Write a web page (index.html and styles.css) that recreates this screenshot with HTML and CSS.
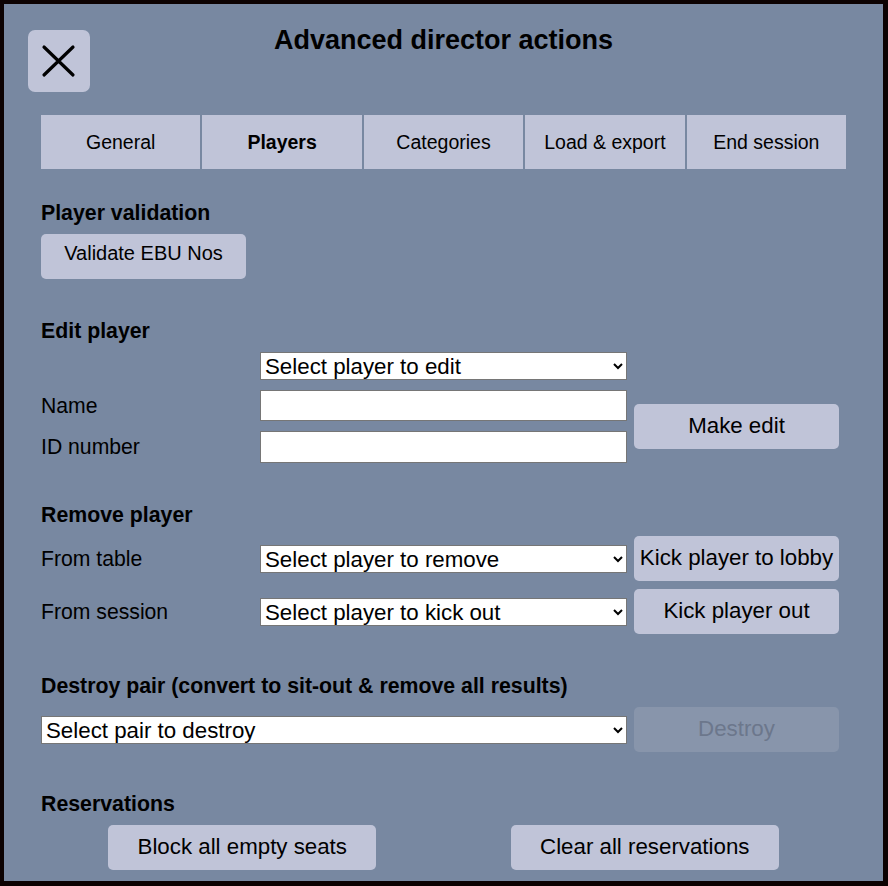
FILE: index.html
```html
<!DOCTYPE html>
<html lang="en">

<head>
    <meta charset="UTF-8">
    <meta name="viewport" content="width=device-width, initial-scale=1.0">
    <title>Advanced director actions</title>
    <link rel="stylesheet" href="styles.css">
</head>

<body>
    <div class="dialog">
        <div class="dialog-header">
            <button class="close-btn" title="Close">
                <svg width="62" height="62" viewBox="0 0 62 62">
                    <path d="M16 17 L45 45 M45 17 L16 45" stroke="#000" stroke-width="3.2" stroke-linecap="round" fill="none" />
                </svg>
            </button>
            <h2 class="dialog-title">Advanced director actions</h2>
            <span></span>
        </div>

        <div class="dialog-body">
            <div class="tabs">
                <button class="tab">General</button>
                <button class="tab tab-active">Players</button>
                <button class="tab">Categories</button>
                <button class="tab">Load &amp; export</button>
                <button class="tab">End session</button>
            </div>

            <section class="section section-first">
                <h3>Player validation</h3>
                <button class="btn btn-small">Validate EBU Nos</button>
            </section>

            <section class="section">
                <h3>Edit player</h3>
                <div class="form-grid edit-grid">
                    <span class="label-row1"></span>
                    <select class="field select-edit">
                        <option>Select player to edit</option>
                    </select>
                    <label class="field-label label-row2" for="editName">Name</label>
                    <input class="field input-row2" type="text" id="editName">
                    <button class="btn btn-edit">Make edit</button>
                    <label class="field-label label-row3" for="editId">ID number</label>
                    <input class="field input-row3" type="text" id="editId">
                </div>
            </section>

            <section class="section">
                <h3>Remove player</h3>
                <div class="form-grid remove-grid">
                    <span class="field-label">From table</span>
                    <select class="field">
                        <option>Select player to remove</option>
                    </select>
                    <button class="btn">Kick player to lobby</button>
                    <span class="field-label">From session</span>
                    <select class="field">
                        <option>Select player to kick out</option>
                    </select>
                    <button class="btn">Kick player out</button>
                </div>
            </section>

            <section class="section">
                <h3>Destroy pair (convert to sit-out &amp; remove all results)</h3>
                <div class="form-grid remove-grid">
                    <select class="field field-wide">
                        <option>Select pair to destroy</option>
                    </select>
                    <button class="btn" disabled>Destroy</button>
                </div>
            </section>

            <section class="section">
                <h3>Reservations</h3>
                <div class="reserve-row">
                    <button class="btn btn-wide">Block all empty seats</button>
                    <button class="btn btn-wide">Clear all reservations</button>
                </div>
            </section>
        </div>
    </div>
</body>

</html>
```

FILE: styles.css
```css
* {
    margin: 0;
    padding: 0;
    box-sizing: border-box;
    font-family: 'Liberation Sans', Arial, sans-serif;
}
body {
    background-color: rgb(12, 2, 2);
    height: 886px;
    overflow: hidden;
    padding: 4px 5px 5px 4px;
}
.dialog {
    height: 877px;
    background-color: rgb(120, 136, 161);
    color: #000;
}
.dialog-header {
    display: grid;
    grid-template-columns: 1fr auto 1fr;
    align-items: start;
    padding: 20px 24px 0 24px;
}
.close-btn {
    width: 62px;
    height: 62px;
    margin-top: 6px;
    border: none;
    border-radius: 7px;
    background-color: rgb(192, 196, 216);
    display: flex;
    cursor: pointer;
}
.dialog-title {
    font-size: 27px;
    line-height: 32px;
    font-weight: bold;
}
.dialog-body {
    padding: 0 37px;
}
.tabs {
    display: flex;
    gap: 2px;
    margin-top: 23px;
}
.tab {
    flex: 1;
    height: 54px;
    border: none;
    background-color: rgb(192, 196, 216);
    font-size: 19.5px;
    color: #000;
    cursor: pointer;
}
.tab-active {
    font-weight: bold;
}
.section {
    margin-top: 40px;
}
.section-first {
    margin-top: 32px;
}
.section h3 {
    font-size: 21.3px;
    line-height: 24px;
    font-weight: bold;
    margin-bottom: 9px;
}
.btn {
    width: 205px;
    height: 45px;
    border: none;
    border-radius: 5px;
    background-color: rgb(192, 196, 216);
    font-size: 22.3px;
    line-height: 25px;
    padding: 9px 0 11px 0;
    color: #000;
    cursor: pointer;
    white-space: nowrap;
}
.btn:disabled {
    background-color: rgb(136, 149, 171);
    color: rgb(108, 119, 140);
    cursor: default;
}
.btn-small {
    font-size: 20px;
    line-height: 23px;
    padding: 8px 0 14px 0;
}
.btn-wide {
    width: 268px;
    justify-self: center;
}
.form-grid {
    display: grid;
    grid-template-columns: 212px 367px 205px;
    column-gap: 7px;
    align-items: center;
}
.edit-grid {
    grid-template-rows: 28px 31px 32px;
    row-gap: 10px;
}
.label-row1 { grid-area: 1 / 1; }
.select-edit { grid-area: 1 / 2; }
.label-row2 { grid-area: 2 / 1; }
.input-row2 { grid-area: 2 / 2; }
.label-row3 { grid-area: 3 / 1; }
.input-row3 { grid-area: 3 / 2; }
.btn-edit {
    grid-column: 3;
    grid-row: 2 / span 2;
}
.remove-grid {
    grid-auto-rows: 45px;
    row-gap: 8px;
}
.field-label {
    font-size: 21.2px;
}
.field {
    width: 100%;
    border: 1px solid rgb(118, 118, 118);
    background-color: #fff;
    font-size: 22.3px;
    color: #000;
}
select.field {
    height: 28px;
    padding-left: 0;
}
input.field {
    height: 100%;
    outline: none;
}
.field-wide {
    grid-column: 1 / span 2;
}
.reserve-row {
    display: grid;
    grid-template-columns: 1fr 1fr;
}
```
